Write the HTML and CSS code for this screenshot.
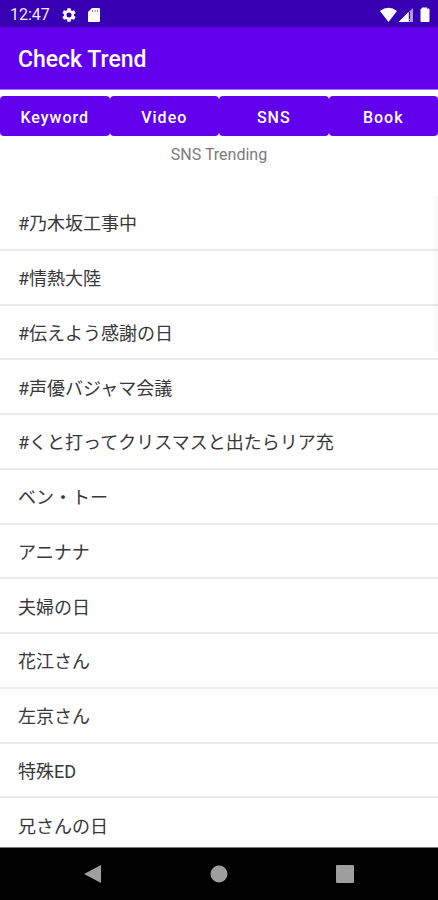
FILE: index.html
```html
<!DOCTYPE html>
<html lang="ja">
<head>
<meta charset="utf-8">
<meta name="viewport" content="width=device-width, initial-scale=1">
<title>Check Trend</title>
<link rel="stylesheet" href="styles.css">
</head>
<body>
<div class="status">
  <time>12:47</time>
  <svg class="gear" viewBox="2 2 20 20" aria-hidden="true"><path d="M19.14 12.94c.04-.3.06-.61.06-.94s-.02-.64-.07-.94l2.03-1.58c.18-.14.23-.41.12-.61l-1.92-3.32c-.12-.22-.37-.29-.59-.22l-2.39.96c-.5-.38-1.03-.7-1.62-.94l-.36-2.54c-.04-.24-.24-.41-.48-.41h-3.84c-.24 0-.43.17-.47.41l-.36 2.54c-.59.24-1.13.57-1.62.94l-2.39-.96c-.22-.08-.47 0-.59.22L2.74 8.87c-.12.21-.08.47.12.61l2.03 1.58c-.05.3-.09.63-.09.94s.02.64.07.94l-2.03 1.58c-.18.14-.23.41-.12.61l1.92 3.32c.12.22.37.29.59.22l2.39-.96c.5.38 1.03.7 1.62.94l.36 2.54c.05.24.24.41.48.41h3.84c.24 0 .44-.17.47-.41l.36-2.54c.59-.24 1.13-.56 1.62-.94l2.39.96c.22.08.47 0 .59-.22l1.92-3.32c.12-.22.07-.47-.12-.61zM12 15.600a3.600 3.600 0 1 1 0-7.200 3.600 3.600 0 0 1 0 7.200z"/></svg>
  <svg class="card" viewBox="0 0 12 14" aria-hidden="true"><path d="M4 0H11a1 1 0 0 1 1 1v12a1 1 0 0 1-1 1H1a1 1 0 0 1-1-1V4z"/><path class="slots" d="M4.500 2v2M7 2v2M9.500 2v2"/></svg>
  <svg class="signals" viewBox="0 0 50 16" aria-hidden="true">
    <path d="M0 4Q8.500-2.500 17 4L8.500 15z"/>
    <path opacity=".6" d="M33 1v14H18.500z"/>
    <path d="M28.500 5v10h-10z"/>
    <path class="alert" d="M29.500 5v7M29.500 13v1"/>
    <path d="M42 .5h5V1.500h1.500a1 1 0 0 1 1 1V14a1 1 0 0 1-1 1h-7a1 1 0 0 1-1-1V2.500a1 1 0 0 1 1-1H42z"/>
  </svg>
</div>
<header class="appbar"><h1>Check Trend</h1></header>
<nav class="tabs" aria-label="Category">
  <button type="button">Keyword</button>
  <button type="button">Video</button>
  <button type="button">SNS</button>
  <button type="button">Book</button>
</nav>
<h2 class="caption">SNS Trending</h2>
<main class="trends">
  <ul>
    <li>#乃木坂工事中</li>
    <li>#情熱大陸</li>
    <li>#伝えよう感謝の日</li>
    <li>#声優バジャマ会議</li>
    <li>#くと打ってクリスマスと出たらリア充</li>
    <li>ベン・トー</li>
    <li>アニナナ</li>
    <li>夫婦の日</li>
    <li>花江さん</li>
    <li>左京さん</li>
    <li>特殊ED</li>
    <li>兄さんの日</li>
  </ul>
  <div class="scrollbar"></div>
</main>
<footer class="navbar">
  <button type="button" aria-label="Back"><svg viewBox="0 0 18 18"><path d="M17 0v18L0 9z"/></svg></button>
  <button type="button" aria-label="Home"><svg viewBox="0 0 18 18"><circle cx="9" cy="9" r="8.500"/></svg></button>
  <button type="button" aria-label="Recent apps"><svg viewBox="0 0 18 18"><rect width="18" height="18" rx="1"/></svg></button>
</footer>
</body>
</html>
```
FILE: styles.css
```css
* { box-sizing: border-box; }

body {
  margin: 0;
  height: 100vh;
  display: flex;
  flex-direction: column;
  background: #fefefe;
  color: #383838;
  font-family: Roboto, "Noto Sans CJK JP", sans-serif;
}

button { border: 0; padding: 0; font: inherit; }

.status {
  flex: none;
  height: 27px;
  display: flex;
  align-items: center;
  padding: 2px 8px 0 10px;
  background: #3700b3;
  color: #f0eaff;
  font-size: 16px;
}
.status svg { fill: #fff; }
.gear { width: 14px; height: 14px; margin-left: 12px; }
.card { width: 12px; height: 14px; margin-left: 12px; }
.card .slots { stroke: #8a6ad0; }
.signals { width: 50px; height: 16px; margin-left: auto; }
.signals .alert { stroke: #3700b3; }

.appbar {
  flex: none;
  height: 63px;
  display: flex;
  align-items: center;
  padding: 2px 18px 0;
  background: #6200ee;
  border-bottom: 1px solid #a56ff5;
}
.appbar h1 { margin: 0; color: #fff; font-size: 23px; font-weight: 500; }

.tabs {
  flex: none;
  display: grid;
  grid-template-columns: repeat(4, 1fr);
  margin-top: 6px;
}
.tabs button {
  height: 40px;
  padding-top: 2px;
  border-radius: 4px;
  background: #6200ee;
  color: #fff;
  font-size: 16px;
  font-weight: 500;
  letter-spacing: 1px;
}

.caption {
  flex: none;
  margin: 8px 0 0;
  color: #7b7b7b;
  font-size: 16px;
  line-height: 22px;
  font-weight: 400;
  text-align: center;
}

.trends {
  position: relative;
  flex: 1;
  min-height: 0;
  margin-top: 30px;
  overflow: hidden;
}
.trends ul {
  height: calc(100% + 6px);
  margin: 0;
  padding: 0;
  list-style: none;
  display: grid;
  grid-template-rows: repeat(12, 1fr);
}
.trends li {
  display: flex;
  align-items: center;
  padding: 4px 18px 0;
  border-bottom: 2px solid #ebebeb;
  font-size: 18px;
  font-weight: 400;
  line-height: 26px;
}
.scrollbar {
  position: absolute;
  top: 0;
  right: 0;
  width: 4px;
  height: 24%;
  background: rgba(0, 0, 0, 0.02);
}

.navbar {
  flex: none;
  height: 53px;
  display: flex;
  align-items: center;
  justify-content: center;
  gap: 108px;
  background: #000;
  border-top: 1px solid #777;
}
.navbar button { width: 18px; height: 18px; background: none; }
.navbar svg { display: block; width: 18px; height: 18px; fill: #9e9e9e; }
```
